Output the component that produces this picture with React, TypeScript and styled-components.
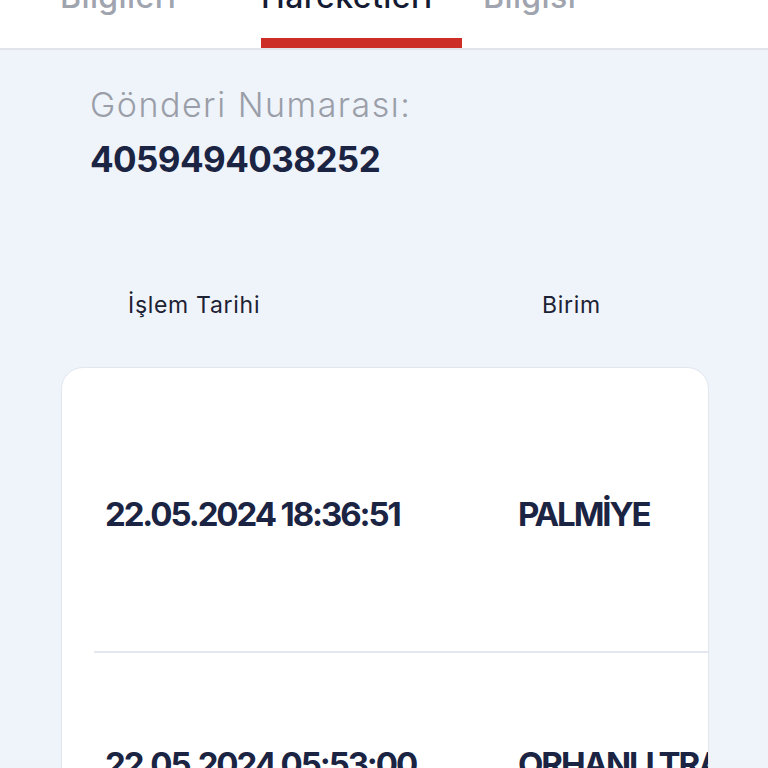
import styled, { createGlobalStyle } from "styled-components";

const GlobalStyle = createGlobalStyle`
  html, body {
    margin: 0;
    padding: 0;
    background: #eff3fa;
    overflow: hidden;
  }
  body {
    font-family: Inter, "Noto Sans", sans-serif;
    color: #1b2442;
  }
  * { box-sizing: border-box; }
`;

const Screen = styled.div`
  width: 768px;
  height: 768px;
  overflow: hidden;
  background: #eff3fa;
`;

const TabBar = styled.nav`
  display: flex;
  margin-top: -19px;
  padding-left: 60px;
  background: #ffffff;
  border-bottom: 2px solid #e1e4ea;
`;

const Tab = styled.div<{ $width: number }>`
  display: flex;
  flex-direction: column;
  width: ${(p) => p.$width}px;
  flex-shrink: 0;
`;

const TabLabel = styled.span<{ $active?: boolean }>`
  font-size: 32px;
  line-height: 1;
  font-weight: 500;
  letter-spacing: 0.4px;
  color: ${(p) => (p.$active ? "#141b33" : "#a0a4ae")};
`;

const Indicator = styled.div<{ $active?: boolean }>`
  margin-top: 25px;
  width: 201px;
  height: 10px;
  background: ${(p) => (p.$active ? "#cc2e27" : "transparent")};
`;

const Info = styled.section`
  display: flex;
  flex-direction: column;
  gap: 20px;
  padding: 38px 0 0 90px;
`;

const InfoLabel = styled.span`
  font-size: 34px;
  line-height: 1;
  font-weight: 300;
  letter-spacing: 1.5px;
  color: #9a9ea8;
`;

const InfoValue = styled.span`
  font-size: 35px;
  line-height: 1;
  font-weight: 700;
  letter-spacing: -0.6px;
  color: #1b2442;
`;

const TableHead = styled.div`
  display: grid;
  grid-template-columns: 414px 1fr;
  padding: 117px 0 0 128px;
`;

const HeadCell = styled.span`
  font-size: 23px;
  line-height: 1;
  font-weight: 400;
  letter-spacing: 0.7px;
  color: #1c2233;
`;

const Card = styled.div`
  margin: 50px 0 0 61px;
  width: 648px;
  height: 480px;
  background: #ffffff;
  border: 1.5px solid #e2e6ee;
  border-radius: 22px;
  overflow: hidden;
`;

const Rows = styled.div`
  margin-left: 32px;
  width: 1200px;
`;

const Row = styled.div<{ $top: number; $bottom: number; $divider?: boolean }>`
  display: grid;
  grid-template-columns: 413px 1fr;
  padding: ${(p) => p.$top}px 0 ${(p) => p.$bottom}px 11px;
  border-bottom: ${(p) => (p.$divider ? "2px solid #e4e7ed" : "none")};
`;

const Cell = styled.span`
  font-size: 33px;
  line-height: 1;
  font-weight: 700;
  letter-spacing: -2.1px;
  color: #1b2442;
  white-space: nowrap;
`;

const movements = [
  { date: "22.05.2024 18:36:51", unit: "PALMİYE", top: 130, bottom: 120, divider: true },
  { date: "22.05.2024 05:53:00", unit: "ORHANLI TRANSFER", top: 95, bottom: 95, divider: false },
];

export default function App() {
  return (
    <Screen>
      <GlobalStyle />
      <TabBar>
        <Tab $width={201}>
          <TabLabel>Bilgileri</TabLabel>
          <Indicator />
        </Tab>
        <Tab $width={222}>
          <TabLabel $active>Hareketleri</TabLabel>
          <Indicator $active />
        </Tab>
        <Tab $width={200}>
          <TabLabel>Bilgisi</TabLabel>
          <Indicator />
        </Tab>
      </TabBar>

      <Info>
        <InfoLabel>Gönderi Numarası:</InfoLabel>
        <InfoValue>4059494038252</InfoValue>
      </Info>

      <TableHead>
        <HeadCell>İşlem Tarihi</HeadCell>
        <HeadCell>Birim</HeadCell>
      </TableHead>

      <Card>
        <Rows>
          {movements.map((m) => (
            <Row key={m.date} $top={m.top} $bottom={m.bottom} $divider={m.divider}>
              <Cell>{m.date}</Cell>
              <Cell>{m.unit}</Cell>
            </Row>
          ))}
        </Rows>
      </Card>
    </Screen>
  );
}
